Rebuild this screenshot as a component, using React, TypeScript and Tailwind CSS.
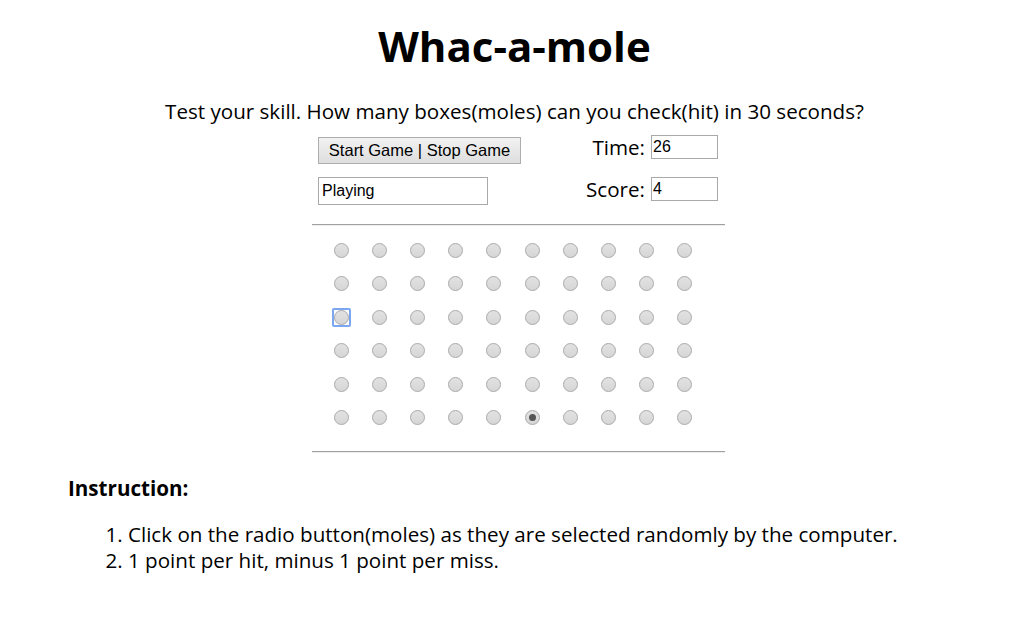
import React from 'react';

const ROWS = 6;
const COLS = 10;

const Mole: React.FC<{ checked?: boolean; focused?: boolean }> = ({ checked, focused }) => {
  return (
    <div className={`w-[19px] h-[19px] flex items-center justify-center ${focused ? 'border-2 border-[#7aa7f0] rounded-[2px]' : ''}`}>
      <div className="w-[15px] h-[15px] shrink-0 rounded-full border border-[#a9a9a9] bg-gradient-to-b from-[#e2e2e2] to-[#d6d6d6] flex items-center justify-center">
        {checked && <div className="w-[7px] h-[7px] rounded-full bg-[#555]" />}
      </div>
    </div>
  );
};

export default function App() {
  return (
    <div className="min-h-screen bg-white text-black font-['Open_Sans',sans-serif]">
      <h1 className="text-center font-bold text-[42px] leading-none pt-[25px]">Whac-a-mole</h1>
      <p className="text-center text-[20.6px] mt-[31px] leading-[26px]">
        Test your skill. How many boxes(moles) can you check(hit) in 30 seconds?
      </p>

      <div className="flex justify-center pl-[8px]">
        <div className="w-[413px] mt-[13px]">
          <div className="flex justify-between pl-[6px] pr-[7px]">
            <div className="flex flex-col gap-[13px]">
              <button className="w-[203px] h-[27px] border border-[#adadad] bg-gradient-to-b from-[#f2f2f2] to-[#dedede] text-[16.5px] font-['Liberation_Sans',sans-serif] text-black">
                Start Game | Stop Game
              </button>
              <div className="w-[170px] h-[28px] border border-[#a9a9a9] px-[3px] text-[16px] leading-[26px] font-['Liberation_Sans',sans-serif]">
                Playing
              </div>
            </div>
            <div className="flex flex-col items-end gap-[14px] -mt-[4px]">
              <div className="flex items-center gap-[6px] h-[28px]">
                <span className="text-[20.6px]">Time:</span>
                <div className="w-[67px] h-[24px] border border-[#a9a9a9] px-[1px] text-[16px] leading-[22px] font-['Liberation_Sans',sans-serif]">26</div>
              </div>
              <div className="flex items-center gap-[6px] h-[28px]">
                <span className="text-[20.6px]">Score:</span>
                <div className="w-[67px] h-[24px] border border-[#a9a9a9] px-[1px] text-[16px] leading-[22px] font-['Liberation_Sans',sans-serif]">4</div>
              </div>
            </div>
          </div>

          <hr className="mt-[19px] border-0 border-t border-t-[#a0a0a0] border-b border-b-[#eeeeee]" />
          <div className="grid grid-cols-10 gap-y-[14.4px] pl-[10px] pr-[21px] pt-[15px] pb-[24px]">
            {Array.from({ length: ROWS * COLS }).map((_, i) => (
              <div key={i} className="flex justify-center">
                <Mole checked={i === 55} focused={i === 20} />
              </div>
            ))}
          </div>
          <hr className="border-0 border-t border-t-[#a0a0a0] border-b border-b-[#eeeeee]" />
        </div>
      </div>

      <div className="pl-[68px] mt-[22px]">
        <h3 className="font-bold text-[20.6px] leading-[26px]">Instruction:</h3>
        <ol className="list-decimal pl-[60px] mt-[20px] text-[20.6px] leading-[26px]">
          <li>Click on the radio button(moles) as they are selected randomly by the computer.</li>
          <li>1 point per hit, minus 1 point per miss.</li>
        </ol>
      </div>
    </div>
  );
}
